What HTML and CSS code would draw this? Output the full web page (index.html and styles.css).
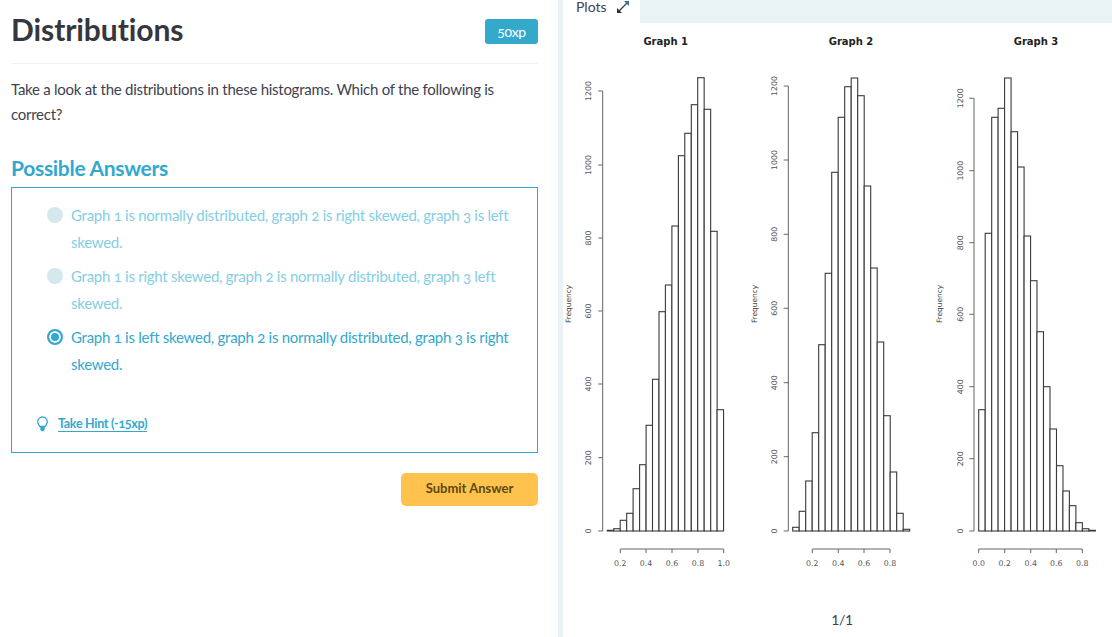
FILE: index.html
```html
<!DOCTYPE html>
<html>
<head>
	<title>Distributions</title>
	<link rel="stylesheet" href="styles.css">
</head>
<body>
	<div class="page">
		<div class="exercise">
			<div class="header">
				<h1>Distributions</h1>
				<span class="xp">50xp</span>
			</div>
			<p class="question">Take a look at the distributions in these histograms. Which of the following is correct?</p>
			<h2>Possible Answers</h2>
			<div class="answers">
				<div class="answer">
					<span class="radio"></span>
					<span>Graph 1 is normally distributed, graph 2 is right skewed, graph 3 is left skewed.</span>
				</div>
				<div class="answer">
					<span class="radio"></span>
					<span>Graph 1 is right skewed, graph 2 is normally distributed, graph 3 left skewed.</span>
				</div>
				<div class="answer selected">
					<span class="radio"></span>
					<span>Graph 1 is left skewed, graph 2 is normally distributed, graph 3 is right skewed.</span>
				</div>
				<div class="hint">
					<svg class="bulb" width="13" height="16" viewBox="0 0 13 16">
						<path d="M6.500 1a4.800 4.800 0 0 0-4.800 4.800c0 2 1.300 3 2.200 4.700h5.200c.9-1.700 2.200-2.700 2.200-4.700A4.800 4.800 0 0 0 6.500 1z" fill="none" stroke="#33a8ce" stroke-width="1.300"/>
						<path d="M4.300 11h4.400v2.800l-1.200 1.400h-2l-1.200-1.400z" fill="#33a8ce"/>
					</svg>
					<a href="#">Take Hint (-15xp)</a>
				</div>
			</div>
			<div class="actions">
				<button class="submit">Submit Answer</button>
			</div>
		</div>

		<div class="plots">
			<div class="tabs">
				<div class="tab">
					Plots
					<svg width="14" height="14" viewBox="0 0 14 14">
						<path d="M3 11 11.500 2.500" stroke="#3a3f4f" stroke-width="1.200"/>
						<path d="M8 1h5v5z" fill="#3a6ea5"/>
						<path d="M1 8v5h5z" fill="#2b2f3a"/>
					</svg>
				</div>
			</div>

			<svg class="canvas" width="549" height="580" viewBox="563 23 549 580">
				<g class="bars">
					<rect x="607.3" y="530.3" width="6.46" height=".7"/>
					<rect x="613.8" y="528.7" width="6.46" height="2.3"/>
					<rect x="620.2" y="520.3" width="6.46" height="10.7"/>
					<rect x="626.7" y="513.3" width="6.46" height="17.7"/>
					<rect x="633.1" y="488.7" width="6.46" height="42.3"/>
					<rect x="639.6" y="464.7" width="6.46" height="66.3"/>
					<rect x="646.1" y="425.3" width="6.46" height="105.7"/>
					<rect x="652.5" y="379.3" width="6.46" height="151.7"/>
					<rect x="659" y="311.7" width="6.46" height="219.3"/>
					<rect x="665.4" y="285" width="6.46" height="246"/>
					<rect x="671.9" y="226" width="6.46" height="305"/>
					<rect x="678.4" y="155.7" width="6.46" height="375.3"/>
					<rect x="684.8" y="133.3" width="6.46" height="397.7"/>
					<rect x="691.3" y="104.7" width="6.46" height="426.3"/>
					<rect x="697.7" y="77.7" width="6.46" height="453.3"/>
					<rect x="704.2" y="109.3" width="6.46" height="421.7"/>
					<rect x="710.7" y="231.3" width="6.46" height="299.7"/>
					<rect x="717.1" y="409.7" width="6.46" height="121.3"/>
				</g>
				<path class="axis" d="M602.700 91V531M598.300 531H602.700M598.300 457.700H602.700M598.300 384H602.700M598.300 311H602.700M598.300 238H602.700M598.300 165H602.700M598.300 91H602.700"/>
				<path class="axis" d="M620.300 553V549H723.700V553M646 549V553M672 549V553M698 549V553"/>
				<text class="title" x="665.700" y="45">Graph 1</text>
				<text class="tick" x="620.300" y="566">0.2</text>
				<text class="tick" x="646" y="566">0.4</text>
				<text class="tick" x="672" y="566">0.6</text>
				<text class="tick" x="698" y="566">0.8</text>
				<text class="tick" x="723.700" y="566">1.0</text>
				<text class="tick" transform="translate(591 531) rotate(-90)">0</text>
				<text class="tick" transform="translate(591 457.700) rotate(-90)">200</text>
				<text class="tick" transform="translate(591 384) rotate(-90)">400</text>
				<text class="tick" transform="translate(591 311) rotate(-90)">600</text>
				<text class="tick" transform="translate(591 238) rotate(-90)">800</text>
				<text class="tick" transform="translate(591 165) rotate(-90)">1000</text>
				<text class="tick" transform="translate(591 91) rotate(-90)">1200</text>
				<text class="ylabel" transform="translate(571 304) rotate(-90)">Frequency</text>

				<g class="bars">
					<rect x="792.7" y="527.3" width="6.5" height="3.7"/>
					<rect x="799.2" y="511.3" width="6.5" height="19.7"/>
					<rect x="805.7" y="481" width="6.5" height="50"/>
					<rect x="812.2" y="432.7" width="6.5" height="98.3"/>
					<rect x="818.7" y="344.7" width="6.5" height="186.3"/>
					<rect x="825.2" y="273.3" width="6.5" height="257.7"/>
					<rect x="831.7" y="172.3" width="6.5" height="358.7"/>
					<rect x="838.2" y="117.3" width="6.5" height="413.7"/>
					<rect x="844.7" y="86.7" width="6.5" height="444.3"/>
					<rect x="851.2" y="78" width="6.5" height="453"/>
					<rect x="857.7" y="95.7" width="6.5" height="435.3"/>
					<rect x="864.2" y="186" width="6.5" height="345"/>
					<rect x="870.7" y="268" width="6.5" height="263"/>
					<rect x="877.2" y="342" width="6.5" height="189"/>
					<rect x="883.7" y="415.7" width="6.5" height="115.3"/>
					<rect x="890.2" y="472" width="6.5" height="59"/>
					<rect x="896.7" y="513.3" width="6.5" height="17.7"/>
					<rect x="903.2" y="529.3" width="6.5" height="1.7"/>
				</g>
				<path class="axis" d="M788.300 86V531M783.700 531H788.300M783.700 456.700H788.300M783.700 382.700H788.300M783.700 308.300H788.300M783.700 234.300H788.300M783.700 160H788.300M783.700 86H788.300"/>
				<path class="axis" d="M812.300 553V549H890V553M838.300 549V553M864 549V553"/>
				<text class="title" x="851" y="45">Graph 2</text>
				<text class="tick" x="812.300" y="566">0.2</text>
				<text class="tick" x="838.300" y="566">0.4</text>
				<text class="tick" x="864" y="566">0.6</text>
				<text class="tick" x="890" y="566">0.8</text>
				<text class="tick" transform="translate(777 531) rotate(-90)">0</text>
				<text class="tick" transform="translate(777 456.700) rotate(-90)">200</text>
				<text class="tick" transform="translate(777 382.700) rotate(-90)">400</text>
				<text class="tick" transform="translate(777 308.300) rotate(-90)">600</text>
				<text class="tick" transform="translate(777 234.300) rotate(-90)">800</text>
				<text class="tick" transform="translate(777 160) rotate(-90)">1000</text>
				<text class="tick" transform="translate(777 86) rotate(-90)">1200</text>
				<text class="ylabel" transform="translate(757 304) rotate(-90)">Frequency</text>

				<g class="bars">
					<rect x="978.7" y="409.7" width="6.48" height="121.3"/>
					<rect x="985.2" y="233.3" width="6.48" height="297.7"/>
					<rect x="991.7" y="117.3" width="6.48" height="413.7"/>
					<rect x="998.1" y="108.3" width="6.48" height="422.7"/>
					<rect x="1004.6" y="78" width="6.48" height="453"/>
					<rect x="1011.1" y="131.7" width="6.48" height="399.3"/>
					<rect x="1017.6" y="167" width="6.48" height="364"/>
					<rect x="1024.1" y="236" width="6.48" height="295"/>
					<rect x="1030.5" y="280.7" width="6.48" height="250.3"/>
					<rect x="1037" y="331.7" width="6.48" height="199.3"/>
					<rect x="1043.5" y="386.7" width="6.48" height="144.3"/>
					<rect x="1050" y="429" width="6.48" height="102"/>
					<rect x="1056.5" y="465.7" width="6.48" height="65.3"/>
					<rect x="1062.9" y="491" width="6.48" height="40"/>
					<rect x="1069.4" y="505.7" width="6.48" height="25.3"/>
					<rect x="1075.9" y="522.7" width="6.48" height="8.3"/>
					<rect x="1082.4" y="528.7" width="6.48" height="2.3"/>
					<rect x="1088.9" y="530.3" width="6.48" height=".7"/>
				</g>
				<path class="axis" d="M974 98.300V531M969.300 531H974M969.300 458.700H974M969.300 386.700H974M969.300 314.300H974M969.300 242.700H974M969.300 170.700H974M969.300 98.300H974"/>
				<path class="axis" d="M978.700 553V549H1082.300V553M1004.700 549V553M1030.700 549V553M1056.300 549V553"/>
				<text class="title" x="1036" y="45">Graph 3</text>
				<text class="tick" x="978.700" y="566">0.0</text>
				<text class="tick" x="1004.700" y="566">0.2</text>
				<text class="tick" x="1030.700" y="566">0.4</text>
				<text class="tick" x="1056.300" y="566">0.6</text>
				<text class="tick" x="1082.300" y="566">0.8</text>
				<text class="tick" transform="translate(962.500 531) rotate(-90)">0</text>
				<text class="tick" transform="translate(962.500 458.700) rotate(-90)">200</text>
				<text class="tick" transform="translate(962.500 386.700) rotate(-90)">400</text>
				<text class="tick" transform="translate(962.500 314.300) rotate(-90)">600</text>
				<text class="tick" transform="translate(962.500 242.700) rotate(-90)">800</text>
				<text class="tick" transform="translate(962.500 170.700) rotate(-90)">1000</text>
				<text class="tick" transform="translate(962.500 98.300) rotate(-90)">1200</text>
				<text class="ylabel" transform="translate(942 304) rotate(-90)">Frequency</text>
			</svg>

			<div class="pager">1/1</div>
		</div>
	</div>
</body>
</html>
```

FILE: styles.css
```css
html, body {
	margin: 0;
	padding: 0;
	height: 100%;
	overflow: hidden;
	background-color: white;
}

body {
	font-family: "Lato", sans-serif;
	font-variant-numeric: oldstyle-nums;
	color: #3d4251;
}

.page {
	display: flex;
	height: 100vh;
}

.exercise {
	width: 527px;
	flex: none;
	padding: 0 20px 0 11px;
	border-right: 5px solid #e9f3f6;
}

.header {
	display: flex;
	justify-content: space-between;
	align-items: flex-start;
	height: 63px;
	border-bottom: 1px solid #eef4f5;
}

h1 {
	margin: 9px 0 0;
	font-size: 30px;
	line-height: 40px;
	font-weight: bold;
	letter-spacing: -.08px;
	color: #35373d;
}

.xp {
	margin-top: 19px;
	width: 53px;
	height: 25px;
	line-height: 25px;
	text-align: center;
	font-size: 14px;
	letter-spacing: -.3px;
	color: white;
	background-color: #33a9cc;
	border-radius: 3px;
}

.question {
	margin: 13px 0 0;
	font-size: 15px;
	line-height: 25px;
	letter-spacing: -.26px;
	width: 500px;
}

h2 {
	margin: 27px 0 0;
	font-size: 21px;
	line-height: 28px;
	font-weight: bold;
	letter-spacing: -.3px;
	color: #33a8ce;
}

.answers {
	box-sizing: border-box;
	height: 266px;
	margin-top: 5px;
	padding: 14px 26px 0 35px;
	border: 1px solid #33a8ce;
}

.answer {
	display: flex;
	gap: 8px;
	margin-bottom: 7px;
	font-size: 15px;
	line-height: 27px;
	letter-spacing: -.26px;
	color: #84cee5;
}

.answer.selected {
	color: #33a8ce;
}

.radio {
	box-sizing: border-box;
	flex: none;
	width: 16px;
	height: 16px;
	margin-top: 5px;
	border-radius: 50%;
	background-color: #d5e8ed;
}

.selected .radio {
	background-color: #33a8ce;
	border: 2px solid #33a8ce;
	box-shadow: inset 0 0 0 2px white;
}

.hint {
	display: flex;
	align-items: center;
	gap: 9px;
	margin: 38px 0 0 -11px;
}

.hint a {
	font-size: 12.500px;
	line-height: 15px;
	font-weight: bold;
	letter-spacing: -.3px;
	color: #33a8ce;
	text-decoration: none;
	border-bottom: 1px solid #33a8ce;
}

.actions {
	display: flex;
	justify-content: flex-end;
	margin-top: 20px;
}

.submit {
	width: 137px;
	height: 33px;
	padding: 0 0 4px;
	border: 0;
	border-radius: 5px;
	font-family: "Lato", sans-serif;
	font-size: 13px;
	font-weight: bold;
	color: #5c4712;
	background-color: #ffc34d;
}

.plots {
	flex: 1;
	min-width: 0;
}

.tabs {
	height: 23px;
	background-color: #e9f3f6;
}

.tab {
	display: flex;
	align-items: flex-start;
	gap: 9px;
	width: 64px;
	height: 23px;
	padding-left: 13px;
	font-size: 14px;
	line-height: 13px;
	background-color: white;
}

.canvas {
	display: block;
}

.bars rect {
	fill: white;
	stroke: #3a3a3a;
	stroke-width: 1.100;
}

.axis {
	fill: none;
	stroke: #666;
	stroke-width: 1;
}

.canvas text {
	font-family: "DejaVu Sans", sans-serif;
	text-anchor: middle;
}

.canvas .title {
	font-size: 10px;
	font-weight: bold;
	fill: #222;
}

.canvas .tick {
	font-size: 7.800px;
	fill: #555;
}

.canvas .ylabel {
	font-size: 7.400px;
	fill: #444;
}

.pager {
	margin-top: 8px;
	padding-left: 9px;
	text-align: center;
	font-size: 14px;
	line-height: 17px;
	font-variant-numeric: lining-nums;
	letter-spacing: -.3px;
}
```
